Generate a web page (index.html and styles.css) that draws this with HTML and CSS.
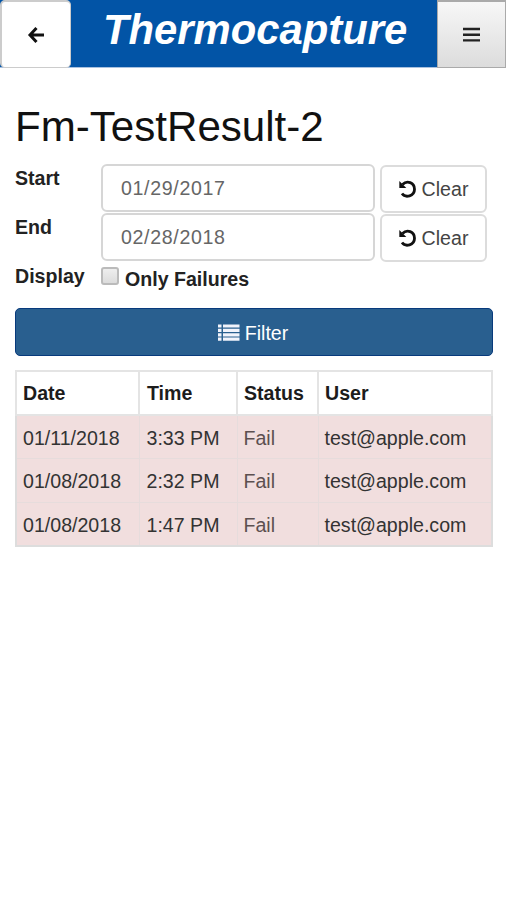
FILE: index.html
```html
<!DOCTYPE html>
<html lang="en">
<head>
<meta charset="utf-8">
<title>Thermocapture</title>
<link rel="stylesheet" href="styles.css">
</head>
<body>
<header class="bar">
  <button class="back" aria-label="Back"><svg width="18" height="18" viewBox="0 0 18 18"><path d="M9.500 2 3 9l6.500 7M3 9h14" fill="none" stroke="#111" stroke-width="3"/></svg></button>
  <div class="brand">Thermocapture</div>
  <button class="menu" aria-label="Menu"><svg width="18" height="16" viewBox="0 0 18 16"><path d="M0 2h17M0 7.700h17M0 13.400h17" stroke="#222" stroke-width="2.400"/></svg></button>
</header>
<main>
  <h1>Fm-TestResult-2</h1>
  <div class="row">
    <label for="start">Start</label>
    <input class="date" id="start" type="text" value="01/29/2017">
    <button class="clear"><svg width="18" height="18" viewBox="0 0 18 18"><path d="M3.500 4.500C8 0 15.500 2.500 15.500 9.200c0 7-9 9.200-12.500 4.300" fill="none" stroke="#111" stroke-width="2.800"/><path d="M.3 1v7h7z" fill="#111"/></svg>Clear</button>
  </div>
  <div class="row">
    <label for="end">End</label>
    <input class="date" id="end" type="text" value="02/28/2018">
    <button class="clear"><svg width="18" height="18" viewBox="0 0 18 18"><path d="M3.500 4.500C8 0 15.500 2.500 15.500 9.200c0 7-9 9.200-12.500 4.300" fill="none" stroke="#111" stroke-width="2.800"/><path d="M.3 1v7h7z" fill="#111"/></svg>Clear</button>
  </div>
  <div class="row display">
    <span class="name">Display</span>
    <input class="check" id="fails" type="checkbox">
    <label class="option" for="fails">Only Failures</label>
  </div>
  <button class="filter"><svg width="22" height="17" viewBox="0 0 22 17"><path d="M0 2h3.500M5 2h16.500M0 6.400h3.500M5 6.400h16.500M0 10.800h3.500M5 10.800h16.500M0 15.200h3.500M5 15.200h16.500" stroke="#f1f3fb" stroke-width="3.200"/></svg><span>Filter</span></button>
  <table>
    <colgroup><col class="c-date"><col class="c-time"><col class="c-status"><col></colgroup>
    <thead><tr><th>Date</th><th>Time</th><th>Status</th><th>User</th></tr></thead>
    <tbody>
      <tr><td>01/11/2018</td><td>3:33 PM</td><td class="fail">Fail</td><td>test@apple.com</td></tr>
      <tr><td>01/08/2018</td><td>2:32 PM</td><td class="fail">Fail</td><td>test@apple.com</td></tr>
      <tr><td>01/08/2018</td><td>1:47 PM</td><td class="fail">Fail</td><td>test@apple.com</td></tr>
    </tbody>
  </table>
</main>
</body>
</html>
```
FILE: styles.css
```css
* { box-sizing: border-box; }
body {
  margin: 0;
  background: #fff;
  color: #222;
  font: 19.6px/28px "Liberation Sans", Arial, sans-serif;
}
button, input { font: inherit; margin: 0; }
button { display: flex; align-items: center; justify-content: center; padding: 0; }
.bar { display: flex; height: 68px; background: #0254a6; border-bottom: 1px solid #a9c1df; }
.back {
  width: 71px;
  height: 68px;
  background: #fff;
  border: 1px solid #ccc;
  border-top-width: 2px;
  border-left-width: 2px;
  border-radius: 5px;
}
.brand {
  flex: 1;
  padding-left: 32px;
  color: #fff;
  font-size: 41.8px;
  font-weight: bold;
  font-style: italic;
  line-height: 59px;
}
.menu {
  width: 69px;
  height: 68px;
  border: 1px solid #aaa;
  border-top: 2px solid #aaa;
  background: linear-gradient(#f7f7f7, #dcdcdc);
}
main { padding: 36px 13px 0 15px; }
h1 { margin: 0 0 14px; font-size: 42.1px; font-weight: normal; line-height: 46px; color: #111; }
.row { display: flex; height: 49px; }
.row > label, .name { width: 86px; font-weight: bold; }
.date {
  width: 274px;
  height: 48px;
  margin: 0 5px 0 0;
  padding: 0 18px;
  border: 2px solid #d6d6d6;
  border-radius: 6px;
  background: #fff;
  color: #666;
  letter-spacing: .65px;
}
.clear {
  gap: 5px;
  width: 107px;
  height: 48px;
  margin-top: 1px;
  border: 2px solid #dcdcdc;
  border-radius: 6px;
  background: #fff;
  color: #444;
}
.display { height: 46px; }
.check {
  appearance: none;
  width: 18px;
  height: 18px;
  margin: 5px 6px 0 0;
  border: 2px solid #bbb;
  border-radius: 3px;
  background: linear-gradient(#eee, #dcdcdc);
}
.row > .option { width: auto; padding-top: 3px; }
.filter {
  gap: 5px;
  width: 100%;
  height: 48px;
  padding-right: 2px;
  border: 1px solid #083a7c;
  border-radius: 5px;
  background: #295f8f;
  color: #fff;
}
.filter span { padding-top: 2px; }
table {
  width: 478px;
  margin-top: 14px;
  table-layout: fixed;
  border-collapse: collapse;
  border: 2px solid #ddd;
}
.c-date { width: 123px; }
.c-time { width: 98px; }
.c-status { width: 81px; }
th, td { height: 44px; padding: 0 7px; border: 1px solid #e6dcdc; text-align: left; }
th { padding-left: 6px; border: 2px solid #e4e4e4; color: #1c1c1c; }
td { height: 43.6px; padding-top: 2px; padding-left: 6px; background: #f1dede; color: #333; }
td + td { padding-left: 7px; }
th + th { padding-left: 7px; }
th:nth-child(n+3), td:nth-child(n+3) { padding-left: 6px; }
.fail { color: #5c5050; }
```
